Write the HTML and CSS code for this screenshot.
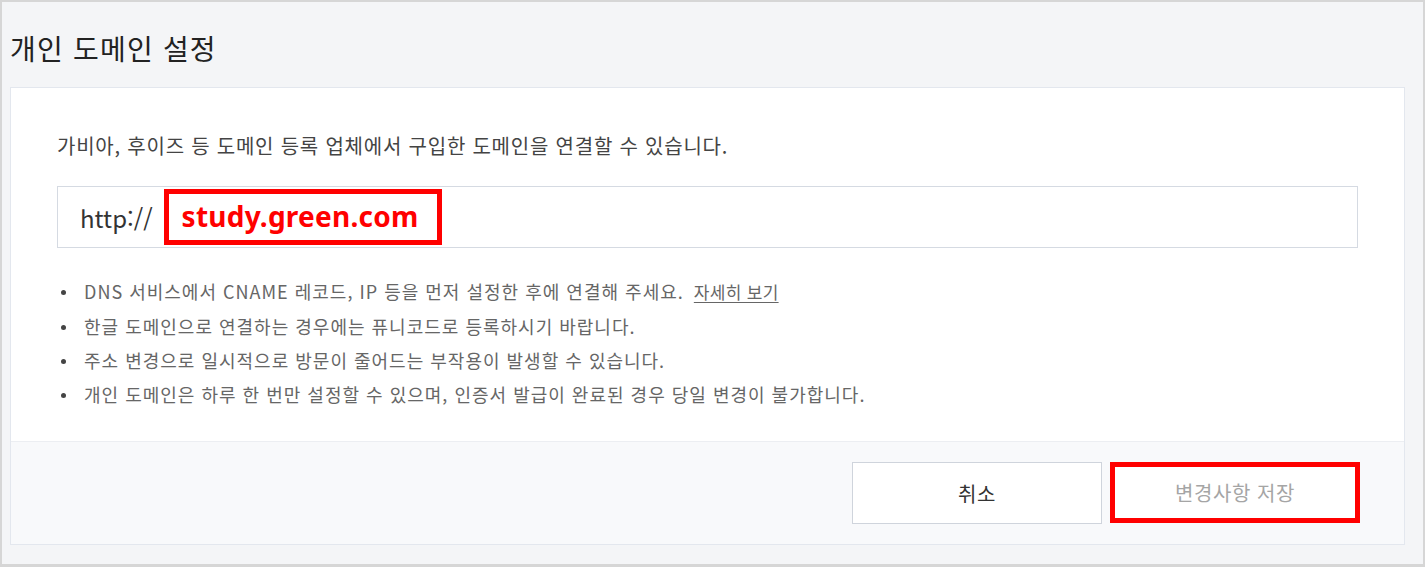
FILE: index.html
```html
<!DOCTYPE html>
<html lang="ko">
<head>
<meta charset="utf-8">
<link rel="stylesheet" href="styles.css">
</head>
<body>
<div class="frame">
  <h1 class="title">개인 도메인 설정</h1>
  <section class="card">
    <div class="card-body">
      <p class="desc">가비아, 후이즈 등 도메인 등록 업체에서 구입한 도메인을 연결할 수 있습니다.</p>
      <div class="domain-input">
        <span class="prefix">http://</span>
        <span class="domain">study.green.com</span>
      </div>
      <ul class="notes">
        <li>DNS 서비스에서 CNAME 레코드, IP 등을 먼저 설정한 후에 연결해 주세요. <a class="more" href="#">자세히 보기</a></li>
        <li>한글 도메인으로 연결하는 경우에는 퓨니코드로 등록하시기 바랍니다.</li>
        <li>주소 변경으로 일시적으로 방문이 줄어드는 부작용이 발생할 수 있습니다.</li>
        <li>개인 도메인은 하루 한 번만 설정할 수 있으며, 인증서 발급이 완료된 경우 당일 변경이 불가합니다.</li>
      </ul>
    </div>
    <div class="card-footer">
      <button class="btn btn-cancel" type="button">취소</button>
      <button class="btn btn-save" type="button">변경사항 저장</button>
    </div>
  </section>
</div>
</body>
</html>
```

FILE: styles.css
```css
* { box-sizing: border-box; }
html, body { margin: 0; padding: 0; }
body {
  font-family: "Noto Sans CJK KR", "Noto Sans", sans-serif;
  background: #f4f5f7;
}
.frame {
  width: 1425px;
  height: 567px;
  border: 2px solid #d6d6d6;
  border-bottom-width: 3px;
  background: #f4f5f7;
  padding: 0 18px 0 8px;
}
.title {
  margin: 0;
  padding-top: 26px;
  height: 85px;
  font-size: 28px;
  line-height: 40px;
  font-weight: 400;
  letter-spacing: 1.2px;
  color: #222;
}
.card {
  background: #fff;
  border: 1px solid #e3e7ee;
  width: 1395px;
}
.card-body {
  padding: 43px 46px 30px 46px;
}
.desc {
  margin: 0;
  font-size: 20px;
  line-height: 30px;
  letter-spacing: 0.78px;
  color: #444;
}
.domain-input {
  margin-top: 25px;
  width: 1301px;
  height: 62px;
  border: 1px solid #d5dae2;
  display: flex;
  align-items: center;
  padding-left: 22px;
}
.prefix {
  font-size: 24px;
  color: #333;
  margin-right: 11px;
}
.domain {
  height: 56px;
  border: 5px solid #ff0000;
  display: flex;
  align-items: center;
  padding: 0 18px 2px 13px;
  font-family: "Noto Sans", sans-serif;
  font-weight: 700;
  font-size: 28px;
  letter-spacing: 0.25px;
  color: #ff0000;
}
.notes {
  list-style: none;
  margin: 26px 0 0 0;
  padding: 0;
}
.notes li {
  position: relative;
  padding-left: 27px;
  font-size: 18px;
  line-height: 34px;
  letter-spacing: 1.0px;
  color: #666;
}
.notes li::before {
  content: "";
  position: absolute;
  left: 4px;
  top: 16px;
  width: 5px;
  height: 5px;
  border-radius: 50%;
  background: #444;
}
.more {
  color: #666;
  margin-left: 4px;
  font-size: 17px;
  letter-spacing: 0.3px;
  text-decoration: underline;
  text-underline-offset: 3px;
}
.card-footer {
  background: #f8f9fb;
  border-top: 1px solid #eceef2;
  padding: 20px 44px 20px 0;
  display: flex;
  justify-content: flex-end;
  gap: 8px;
}
.btn {
  width: 250px;
  height: 62px;
  font-family: inherit;
  font-size: 20px;
  background: #fff;
  cursor: pointer;
}
.btn-cancel {
  border: 1px solid #cfd4dc;
  color: #333;
  letter-spacing: 0.5px;
}
.btn-save {
  height: 61px;
  border: 5px solid #ff0000;
  color: #a5a5a5;
  letter-spacing: 0.6px;
}
```
